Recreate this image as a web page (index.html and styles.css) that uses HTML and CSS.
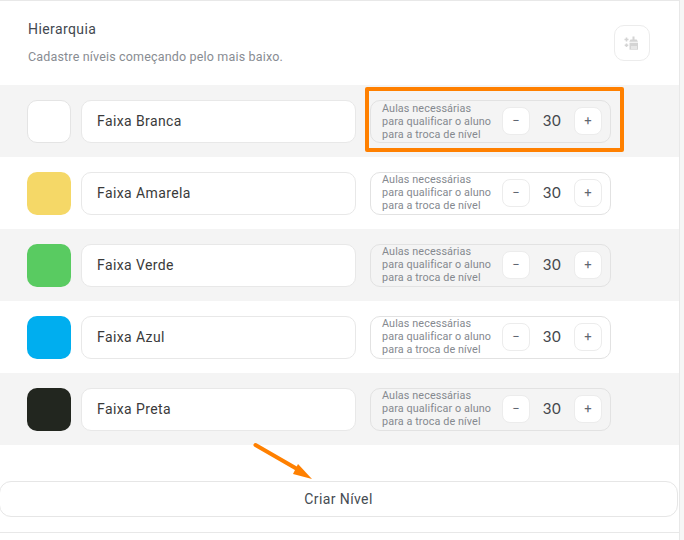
FILE: index.html
```html
<!DOCTYPE html>
<html>
<head>
  <title>Hierarquia</title>
  <link rel="stylesheet" href="styles.css">
</head>
<body>
  <div class="panel">
    <div class="header">
      <div>
        <h1>Hierarquia</h1>
        <p>Cadastre níveis começando pelo mais baixo.</p>
      </div>
      <div class="clean-button">
        <svg width="16" height="16" viewBox="0 0 16 16">
          <path d="M8.5 1.5h2v3h2.2l1.3 2.2H5.2L6.5 4.5h2z" fill="#d4d4d4"/>
          <path d="M5.5 7.7h8.5v7H5.5z" fill="#d4d4d4"/>
          <path d="M8 11v3M10 11v3M12 11v3" stroke="#fff" stroke-width="0.9"/>
          <path d="M2.5 2.5v4M.5 4.5h4M2.5 8.5v3.6M.7 10.3h3.6" stroke="#d4d4d4" stroke-width="1.6"/>
        </svg>
      </div>
    </div>

    <div class="row">
      <div class="swatch white"></div>
      <div class="name">Faixa Branca</div>
      <div class="qty">
        <div class="qty-label">Aulas necessárias<br>para qualificar o aluno<br>para a troca de nível</div>
        <div class="step">−</div>
        <div class="value">30</div>
        <div class="step">+</div>
      </div>
    </div>
    <div class="row">
      <div class="swatch yellow"></div>
      <div class="name">Faixa Amarela</div>
      <div class="qty">
        <div class="qty-label">Aulas necessárias<br>para qualificar o aluno<br>para a troca de nível</div>
        <div class="step">−</div>
        <div class="value">30</div>
        <div class="step">+</div>
      </div>
    </div>
    <div class="row">
      <div class="swatch green"></div>
      <div class="name">Faixa Verde</div>
      <div class="qty">
        <div class="qty-label">Aulas necessárias<br>para qualificar o aluno<br>para a troca de nível</div>
        <div class="step">−</div>
        <div class="value">30</div>
        <div class="step">+</div>
      </div>
    </div>
    <div class="row">
      <div class="swatch blue"></div>
      <div class="name">Faixa Azul</div>
      <div class="qty">
        <div class="qty-label">Aulas necessárias<br>para qualificar o aluno<br>para a troca de nível</div>
        <div class="step">−</div>
        <div class="value">30</div>
        <div class="step">+</div>
      </div>
    </div>
    <div class="row">
      <div class="swatch black"></div>
      <div class="name">Faixa Preta</div>
      <div class="qty">
        <div class="qty-label">Aulas necessárias<br>para qualificar o aluno<br>para a troca de nível</div>
        <div class="step">−</div>
        <div class="value">30</div>
        <div class="step">+</div>
      </div>
    </div>

    <div class="footer">
      <div class="create">Criar Nível</div>
    </div>

    <div class="highlight"></div>
    <svg class="arrow" width="70" height="45" viewBox="0 0 70 45">
      <path d="M3.5 4L46 28.5" stroke="#ff8000" stroke-width="4" stroke-linecap="round"/>
      <path d="M60 38L41 33L46 23z" fill="#ff8000"/>
    </svg>
  </div>
</body>
</html>
```

FILE: styles.css
```css
html, body {
  margin: 0;
  padding: 0;
  background-color: #f6f6f6;
}

body {
  font-family: Roboto, "Liberation Sans", sans-serif;
  overflow: hidden;
}

.panel {
  position: relative;
  box-sizing: border-box;
  width: 680px;
  height: 540px;
  background-color: #fff;
  border-top: 1px solid #e8e8e8;
  border-right: 1px solid #e8e8e8;
}

.header {
  display: flex;
  justify-content: space-between;
  align-items: flex-start;
  height: 84px;
  padding: 0 29px 0 28px;
}

h1 {
  margin: 20px 0 0;
  font-size: 14px;
  line-height: 17px;
  font-weight: 400;
  letter-spacing: 0.4px;
  color: #43484f;
}

.header p {
  margin: 10px 0 0;
  font-size: 12.5px;
  line-height: 17px;
  letter-spacing: 0.17px;
  color: #888c92;
}

.clean-button {
  display: flex;
  align-items: center;
  justify-content: center;
  box-sizing: border-box;
  width: 36px;
  height: 36px;
  margin-top: 24px;
  border: 1px solid #ececec;
  border-radius: 10px;
}

.row {
  display: flex;
  align-items: center;
  height: 72px;
  padding-left: 27px;
}

.row:nth-child(even) {
  background-color: #f4f4f4;
}

.row:nth-child(n+3) .qty-label {
  padding-bottom: 2px;
}

.swatch {
  box-sizing: border-box;
  width: 44px;
  height: 43px;
  border-radius: 10px;
}

.white {
  background-color: #fff;
  border: 1px solid #e4e4e4;
}

.yellow {
  background-color: #f5d867;
}

.green {
  background-color: #59cb61;
}

.blue {
  background-color: #00aeef;
}

.black {
  background-color: #22261f;
}

.name {
  box-sizing: border-box;
  width: 275px;
  height: 43px;
  margin-left: 10px;
  padding-left: 15px;
  border: 1px solid #e8e8e8;
  border-radius: 10px;
  background-color: #fff;
  font-size: 14px;
  line-height: 41px;
  letter-spacing: 0.4px;
  color: #3a3a3a;
}

.qty {
  display: flex;
  align-items: center;
  box-sizing: border-box;
  width: 241px;
  height: 43px;
  margin-left: 14px;
  padding: 0 8px 0 11px;
  border: 1px solid #e2e2e2;
  border-radius: 10px;
}

.qty-label {
  width: 120px;
  font-size: 10.8px;
  line-height: 13px;
  letter-spacing: 0.1px;
  color: #85898f;
}

.step {
  box-sizing: border-box;
  width: 28px;
  height: 28px;
  border: 1px solid #ececec;
  border-radius: 8px;
  background-color: #fff;
  text-align: center;
  font-size: 13px;
  line-height: 25px;
  color: #5f6770;
}

.value {
  width: 44px;
  padding-bottom: 2px;
  text-align: center;
  font-family: Lato, sans-serif;
  font-size: 15px;
  letter-spacing: 0.6px;
  color: #44474b;
}

.footer {
  height: 51px;
  padding-top: 36px;
  border-bottom: 1px solid #e8e8e8;
}

.create {
  box-sizing: border-box;
  width: 679px;
  height: 36px;
  margin-left: -1px;
  border: 1px solid #e6e6e6;
  border-radius: 12px;
  text-align: center;
  font-size: 14px;
  line-height: 34px;
  letter-spacing: 0.4px;
  color: #454b52;
}

.highlight {
  position: absolute;
  left: 365px;
  top: 86px;
  box-sizing: border-box;
  width: 259px;
  height: 65px;
  border: 4px solid #ff8000;
  border-radius: 2px;
}

.arrow {
  position: absolute;
  left: 252px;
  top: 440px;
}
```
